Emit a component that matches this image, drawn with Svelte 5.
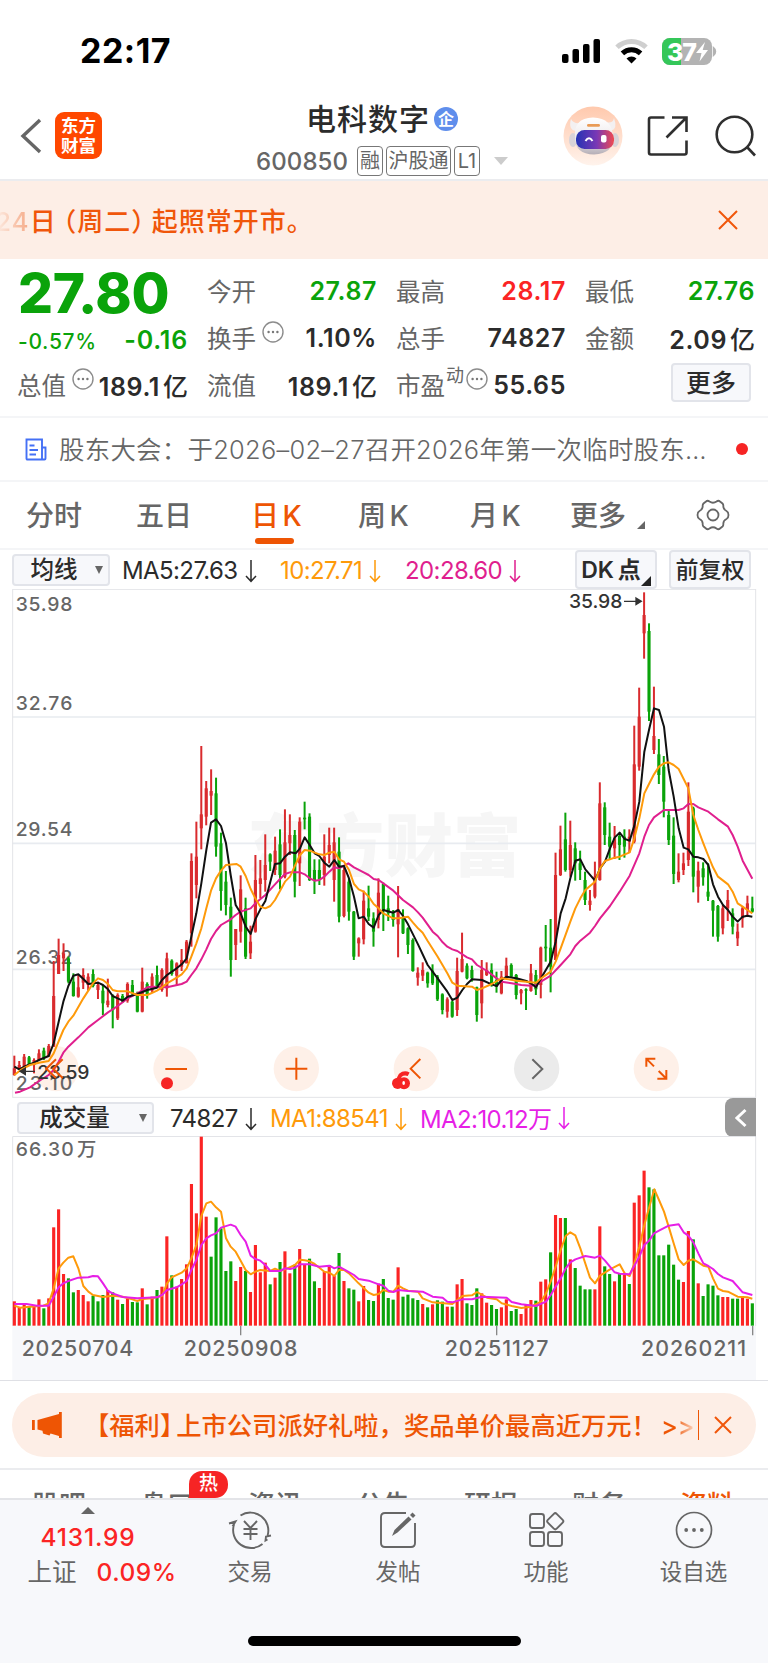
<script lang="ts">

	// Chart geometry (three chart units to one css pixel):
	const firstX = 43;
	const step = 14.76;
	const volumeBase = 707;
	const xAt = (i: number) => firstX + step * i;

	// Candles: [direction, high, body top, body bottom, low]
	const candles: number[][] = [
		[1,1427,1465,1485,1487],[1,1443,1455,1468,1468],[1,1422,1430,1462,1470],[-1,1428,1432,1455,1458],[1,1435,1440,1455,1480],
		[1,1408,1420,1440,1440],[-1,1403,1412,1435,1440],[1,1392,1398,1430,1430],[1,1143,1248,1400,1400],[1,1076,1125,1182,1182],
		[1,1090,1120,1135,1173],[-1,1130,1135,1205,1210],[-1,1180,1205,1248,1250],[1,1185,1222,1250,1253],[1,1165,1185,1208,1227],
		[1,1180,1190,1215,1232],[-1,1168,1182,1218,1222],[1,1205,1215,1230,1257],[-1,1215,1232,1270,1305],[1,1196,1262,1275,1282],
		[-1,1243,1248,1290,1345],[1,1240,1245,1315,1320],[-1,1242,1248,1265,1268],[1,1207,1212,1262,1268],[-1,1200,1215,1240,1245],
		[-1,1235,1240,1295,1297],[1,1163,1205,1295,1297],[-1,1207,1212,1245,1256],[1,1180,1190,1232,1238],[-1,1157,1185,1218,1222],
		[1,1165,1170,1230,1235],[1,1118,1135,1225,1250],[-1,1138,1142,1182,1187],[1,1147,1150,1187,1217],[1,1107,1140,1160,1173],
		[1,1080,1085,1150,1150],[1,820,843,1060,1100],[1,725,830,915,955],[1,498,703,745,808],[1,603,625,710,736],
		[1,568,633,647,705],[-1,593,640,800,830],[-1,758,790,933,992],[-1,873,905,975,1006],[-1,953,980,1140,1190],
		[1,1047,1047,1095,1140],[1,886,928,1055,1088],[-1,953,985,1130,1137],[1,1037,1085,1120,1137],[1,825,900,1055,1058],
		[1,840,895,912,955],[1,763,855,900,935],[-1,820,823,845,873],[1,770,812,870,885],[-1,748,793,885,928],
		[1,688,787,890,895],[1,703,765,790,825],[-1,750,765,905,952],[1,712,725,850,918],[-1,665,713,718,748],
		[-1,700,710,900,903],[-1,838,870,900,942],[-1,838,870,897,915],[1,763,830,885,917],[1,743,795,825,850],
		[1,743,787,900,965],[-1,772,815,1010,1027],[1,862,870,1008,1012],[-1,895,905,995,1022],[-1,993,995,1130,1140],
		[1,1072,1075,1090,1130],[1,932,962,1078,1093],[-1,917,985,1010,1023],[-1,997,1015,1055,1100],[1,895,938,1020,1045],
		[-1,908,912,990,1053],[-1,947,985,1000,1023],[-1,990,1000,1020,1040],[1,918,988,1033,1132],[-1,988,1012,1060,1062],
		[-1,1042,1045,1095,1122],[-1,1075,1080,1173,1175],[1,1162,1178,1193,1217],[1,1147,1170,1187,1203],[-1,1175,1178,1210,1223],
		[-1,1153,1172,1210,1215],[-1,1185,1190,1258,1263],[-1,1240,1243,1290,1303],[1,1252,1258,1295,1313],[-1,1262,1265,1310,1313],
		[1,1133,1173,1290,1308],[1,1058,1137,1175,1177],[-1,1150,1157,1195,1198],[-1,1157,1170,1195,1205],[-1,1220,1222,1305,1325],
		[1,1140,1170,1270,1315],[1,1147,1170,1185,1188],[-1,1150,1170,1215,1220],[-1,1175,1200,1220,1238],[1,1173,1190,1240,1243],
		[1,1133,1157,1190,1193],[-1,1150,1155,1190,1193],[-1,1182,1185,1245,1258],[1,1227,1230,1240,1273],[-1,1225,1228,1232,1290],
		[1,1152,1180,1233,1235],[-1,1170,1185,1228,1245],[1,1100,1103,1215,1255],[-1,1035,1100,1105,1145],[-1,1017,1103,1160,1237],
		[1,818,885,1140,1140],[1,737,808,885,888],[-1,698,778,870,875],[1,722,795,870,890],[-1,787,805,850,902],
		[-1,812,850,870,900],[-1,875,900,960,975],[1,930,962,975,992],[1,845,890,950,955],[1,607,670,900,902],
		[-1,667,682,765,795],[-1,728,770,800,840],[1,738,775,805,837],[-1,758,768,795,840],[-1,748,770,800,833],
		[1,748,770,785,818],[1,437,553,785,790],[1,323,410,560,572],[1,37,105,160,236],[-1,130,153,395,423],
		[1,320,468,510,522],[-1,477,523,585,612],[-1,528,560,665,712],[-1,690,705,780,795],[-1,712,767,882,912],
		[1,820,875,900,907],[1,818,850,870,885],[1,607,695,840,858],[-1,680,685,890,937],[1,845,872,920,968],
		[-1,847,865,892,917],[-1,850,935,950,963],[-1,960,962,992,1070],[-1,975,978,1070,1085],[1,975,985,1045,1063],
		[1,930,960,985,1023],[-1,985,1000,1040,1063],[1,1030,1055,1075,1098],[1,980,985,1015,1043],[1,947,970,990,1005],
		[-1,950,985,995,998]
	];

	// Volume bar tops, negative on a falling day:
	const volumes = [
		634,652,645,-648,645,628,-655,625,412,358,552,-565,-607,600,615,634,-617,-634,-615,600,-607,629,-642,625,-636,
		-637,595,-643,620,-600,590,439,-556,590,567,523,282,370,140,380,-500,-382,-415,-543,-514,573,531,-543,606,465,
		547,518,-583,563,-516,484,550,-524,477,525,-506,-574,594,545,525,558,-489,573,-595,-599,634,588,-630,-633,581,
		-567,-624,-629,532,-620,-614,-625,-630,642,-652,643,-631,-635,650,-650,583,567,-640,-645,-595,610,638,-645,-657,652,
		628,-663,-657,672,643,630,-632,575,568,-487,375,384,-384,508,-534,-587,-598,-598,598,409,-529,-552,574,-551,555,
		-582,338,316,242,-292,-298,-496,-496,-464,-524,-569,576,423,-448,580,-618,-583,-587,-616,621,621,-626,-626,618,626,
		-640
	];

	const priceLines = [
		{ color: '#e01f8e', points: '45,1538 60,1535 90,1522 117,1503 146,1485 161,1470 176,1445 190,1418 205,1400 235,1372 265,1342 294,1320 324,1297 353,1278 383,1255 412,1240 442,1222 456,1220 501,1222 545,1212 560,1205 574,1185 589,1165 604,1138 619,1108 633,1077 648,1053 663,1035 692,1018 707,1005 722,995 752,985 766,970 796,945 825,913 840,897 855,882 870,877 900,877 914,883 929,895 944,902 958,900 973,890 988,875 1003,862 1017,865 1032,857 1045,850 1062,862 1091,877 1106,885 1121,897 1136,900 1150,910 1180,932 1209,960 1239,982 1254,997 1268,1013 1298,1055 1313,1068 1328,1087 1342,1100 1357,1108 1372,1113 1401,1132 1416,1138 1431,1155 1461,1173 1490,1195 1505,1205 1535,1210 1564,1215 1593,1217 1608,1215 1623,1205 1652,1187 1682,1155 1711,1123 1726,1098 1741,1082 1770,1058 1785,1038 1800,1015 1830,978 1859,935 1889,887 1918,820 1933,770 1947,735 1962,712 1992,690 2036,690 2051,685 2065,672 2080,672 2095,682 2125,695 2154,718 2184,740 2198,765 2213,800 2228,842 2257,896' },
		{ color: '#111', points: '43,1460 58,1468 73,1460 88,1453 102,1448 117,1440 146,1428 161,1390 176,1325 190,1265 205,1218 220,1187 235,1183 250,1197 265,1212 294,1208 309,1215 324,1228 338,1248 353,1255 368,1262 383,1250 412,1242 442,1230 471,1223 486,1200 501,1185 530,1165 545,1153 560,1135 574,1070 589,1000 604,910 619,810 633,728 648,718 663,738 678,790 692,885 707,975 722,1000 737,1040 752,1062 766,1018 781,988 796,963 811,905 825,852 840,850 855,830 870,817 887,820 900,805 914,772 929,795 944,820 958,828 973,848 988,860 1003,840 1017,860 1032,858 1047,895 1062,950 1076,1015 1091,1010 1106,1032 1121,1043 1136,1005 1150,990 1180,998 1195,990 1209,1008 1224,1033 1254,1093 1283,1155 1313,1195 1342,1235 1357,1260 1372,1253 1387,1230 1401,1212 1416,1198 1446,1200 1475,1213 1490,1218 1505,1200 1520,1190 1549,1195 1579,1203 1593,1210 1608,1222 1623,1195 1652,1145 1667,1085 1682,1000 1697,955 1711,895 1726,842 1741,838 1756,868 1785,902 1800,865 1815,845 1830,805 1844,773 1859,758 1874,777 1889,782 1903,737 1918,665 1933,515 1947,450 1962,385 1977,390 1992,440 2006,570 2021,650 2036,745 2051,803 2065,808 2080,830 2095,832 2110,837 2125,855 2139,913 2154,950 2169,975 2184,990 2198,1010 2213,1025 2228,1010 2242,1007 2257,1010' },
		{ color: '#fe9a0a', points: '43,1485 65,1468 90,1455 117,1448 146,1443 161,1420 190,1350 205,1325 220,1307 250,1255 279,1210 294,1195 309,1200 324,1212 338,1230 353,1234 383,1234 412,1245 442,1245 471,1232 486,1222 501,1210 530,1193 545,1183 560,1165 574,1130 589,1090 604,1045 619,985 633,932 648,895 663,872 678,855 710,852 722,860 737,888 752,927 766,955 781,980 796,985 811,978 825,960 855,905 870,890 885,857 900,825 914,810 929,812 958,823 973,825 988,818 1003,815 1017,838 1032,845 1047,870 1062,912 1076,928 1091,935 1106,950 1121,972 1136,985 1150,1000 1180,1015 1195,1015 1224,1010 1239,1028 1254,1045 1268,1058 1283,1083 1313,1130 1342,1180 1357,1208 1372,1217 1416,1220 1431,1230 1446,1225 1475,1212 1505,1195 1520,1197 1549,1202 1579,1205 1608,1208 1623,1195 1652,1175 1667,1145 1682,1105 1711,1025 1726,985 1741,955 1756,930 1785,905 1800,865 1815,843 1844,833 1859,830 1889,817 1903,775 1918,715 1933,640 1947,612 1962,583 1977,560 1992,550 2006,547 2021,555 2036,567 2051,597 2065,625 2080,705 2095,750 2110,790 2125,828 2139,862 2154,890 2184,913 2198,935 2213,970 2228,980 2242,990 2257,1000' }
	];

	const volumeLines = [
		{ color: '#fe9a0a', points: '43,647 60,653 90,650 130,647 146,640 161,595 176,535 190,518 205,503 220,499 235,535 250,588 265,605 279,615 309,621 338,617 368,620 397,628 412,633 427,627 456,625 486,618 501,580 515,562 545,548 560,535 574,505 589,465 604,378 619,340 633,335 648,352 663,365 678,445 692,470 707,485 722,512 737,540 752,553 766,545 781,540 811,543 825,536 840,543 855,538 885,525 900,509 914,511 929,514 944,522 973,545 988,548 1003,558 1017,540 1032,540 1047,550 1076,580 1106,608 1121,615 1136,612 1150,600 1165,605 1180,605 1195,587 1209,595 1224,602 1254,605 1268,625 1298,637 1357,642 1387,618 1416,616 1431,606 1461,623 1490,628 1505,640 1535,648 1564,654 1593,650 1623,635 1638,610 1652,575 1667,530 1682,480 1697,438 1711,427 1726,436 1741,475 1770,563 1785,580 1800,557 1830,538 1859,523 1874,550 1889,558 1903,520 1918,470 1933,405 1948,350 1963,298 1977,330 1992,365 2006,410 2021,460 2036,508 2051,525 2065,512 2080,508 2095,517 2110,527 2125,530 2139,565 2154,596 2169,603 2184,605 2213,620 2242,622 2257,626' },
		{ color: '#e61fe6', points: '43,642 80,642 110,647 146,647 161,620 176,592 190,580 205,573 235,563 265,562 279,558 294,559 309,580 324,603 338,610 368,621 412,625 471,622 486,615 501,600 530,592 545,583 560,573 574,540 589,510 604,465 619,445 633,436 648,430 663,413 692,404 707,410 722,435 737,455 752,497 766,507 781,512 796,525 811,543 840,543 855,535 870,537 885,533 900,523 929,523 958,530 988,527 1003,535 1017,530 1032,538 1062,555 1076,567 1106,572 1136,583 1150,587 1165,602 1180,606 1195,600 1224,603 1268,605 1298,620 1328,623 1342,635 1357,637 1387,628 1416,628 1446,620 1520,623 1535,636 1564,643 1608,648 1638,635 1652,615 1682,565 1697,535 1711,517 1726,508 1756,498 1785,503 1800,497 1815,512 1844,547 1859,551 1889,553 1903,527 1918,500 1933,465 1947,452 1962,430 1977,422 2006,407 2036,403 2051,427 2065,437 2080,457 2095,490 2110,520 2125,528 2139,537 2154,552 2169,562 2198,573 2213,590 2228,607 2257,615' }
	];

	const priceLabels = [
		{ text: '35.98', y: 92 },
		{ text: '32.76', y: 390 },
		{ text: '29.54', y: 769 },
		{ text: '26.32', y: 1151 },
		{ text: '23.10', y: 1530 }
	];

	const dates = [
		{ text: '20250704', x: 65, width: 335, tick: 0 },
		{ text: '20250908', x: 551, width: 341, tick: 722 },
		{ text: '20251127', x: 1334, width: 311, tick: 1490 },
		{ text: '20260211', x: 1923, width: 315, tick: 2258 }
	];

	const periods = ['分时', '五日', '日 K', '周 K', '月 K', '更多'];
	const sections = ['股吧', '盘口', '资讯', '公告', '研报', '财务', '资料'];
	let period = $state('日 K');
	let section = $state('资料');

</script>

<!-- #################################################################################################### -->

{#snippet info()}
	<svg class="info" viewBox="0 0 22 22">
		<circle cx="11" cy="11" r="10" fill="none" stroke="#8c8c8c" stroke-width="1.4" />
		<circle cx="6.6" cy="11" r="1.2" fill="#777" />
		<circle cx="11" cy="11" r="1.2" fill="#777" />
		<circle cx="15.4" cy="11" r="1.2" fill="#777" />
	</svg>
{/snippet}

{#snippet down()}
	<svg class="down" viewBox="0 0 12 24" fill="none" stroke="currentColor" stroke-width="1.5">
		<path d="M6 1V22M1 17L6 22.3L11 17" />
	</svg>
{/snippet}

<div class="screen">

	<!-- Status Bar -->
	<div class="status">
		<span class="clock">22:17</span>
		<svg class="signals" width="156" height="28" viewBox="0 0 156 28">
			<rect x="0" y="16" width="6.5" height="9" rx="2" />
			<rect x="10.5" y="11" width="6.5" height="14" rx="2" />
			<rect x="21" y="6" width="6.5" height="19" rx="2" />
			<rect x="31.5" y="1" width="6.5" height="24" rx="2" />
			<g fill="none" stroke-width="5">
				<path d="M55 9.2A21 21 0 0 1 84 9.2" stroke="#cfcfcf" />
				<path d="M60.4 15.4A13.3 13.3 0 0 1 78.6 15.4" stroke="#000" />
			</g>
			<path d="M64.5 20.5A7.4 7.4 0 0 1 74.5 20.5L69.5 25.5Z" />
			<rect x="100" y="0" width="50" height="27" rx="8" fill="#b3b3b3" />
			<path d="M108 0H119V27H108A8 8 0 0 1 100 19V8A8 8 0 0 1 108 0Z" fill="#34c759" />
			<path d="M151.5 9.5A5 5 0 0 1 151.5 17.5Z" fill="#b3b3b3" stroke="#b3b3b3" stroke-width="1.5" />
			<text x="105" y="22.5" class="charge" textLength="30">37</text>
			<path d="M143 4L134 15H139.5L137.5 23.5L146 12H140.7Z" fill="#fff" />
		</svg>
	</div>

	<!-- Header -->
	<header>
		<svg class="back" width="22" height="36" viewBox="0 0 22 36" fill="none" stroke="#666" stroke-width="3.4">
			<path d="M20 2L3 18L20 34" />
		</svg>
		<div class="brand"><span>东方</span><span>财富</span></div>
		<div class="stock">
			<div class="name">
				<h1>电科数字</h1>
				<span class="badge">企</span>
			</div>
			<div class="code">
				<strong>600850</strong>
				<span class="tag">融</span>
				<span class="tag wide">沪股通</span>
				<span class="tag">L1</span>
				<svg width="14" height="8" viewBox="0 0 14 8"><path d="M0 0H14L7 8Z" fill="#ccc" /></svg>
			</div>
		</div>
		<svg class="robot" width="60" height="60" viewBox="0 0 60 60">
			<defs>
				<linearGradient id="halo" x1="0" y1="0" x2="0" y2="1">
					<stop offset="0" stop-color="#ffc9ad" />
					<stop offset="1" stop-color="#fff3ec" />
				</linearGradient>
				<linearGradient id="visor">
					<stop offset="0" stop-color="#2533b4" />
					<stop offset=".55" stop-color="#7a38b5" />
					<stop offset="1" stop-color="#f04a50" />
				</linearGradient>
				<linearGradient id="shell" x1="0" y1="0" x2="0" y2="1">
					<stop offset="0" stop-color="#fff" />
					<stop offset=".6" stop-color="#ece8ea" />
					<stop offset="1" stop-color="#b5aeb6" />
				</linearGradient>
			</defs>
			<circle cx="30" cy="30" r="29.5" fill="url(#halo)" />
			<ellipse cx="10" cy="34" rx="4" ry="7" fill="#d8d3d8" />
			<ellipse cx="52" cy="34" rx="4" ry="7" fill="#d8d3d8" />
			<path d="M8 13Q5 24 13 25L18 17Q10 18 8 13ZM51 12Q55 23 48 25L42 16Q50 18 51 12Z" fill="#f3f0f1" />
			<path d="M12 32Q10 12 30 11.5Q50 12 50 32Q51 47 31 48.5Q12 48 12 32Z" fill="url(#shell)" />
			<rect x="13" y="24" width="38" height="19" rx="8.5" fill="url(#visor)" />
			<rect x="24" y="18" width="13" height="2.8" rx="1.4" fill="#e99b56" />
			<path d="M22.5 35Q26 29.5 29.5 35" fill="none" stroke="#fff" stroke-width="2" />
			<rect x="38" y="29" width="5.5" height="7.5" rx="2" fill="#fff" />
		</svg>
		<svg class="share" width="42" height="42" viewBox="0 0 42 42" fill="none" stroke="#2f2f2f" stroke-width="2.6">
			<path d="M17.5 2.5H4Q2 2.5 2 4.5V37.5Q2 39.5 4 39.5H37.5Q39.5 39.5 39.5 37.5V25.5M25 2.5H39.5V17M39 3L19.5 22.5" />
		</svg>
		<svg class="search" width="42" height="42" viewBox="0 0 42 42" fill="none" stroke="#2f2f2f" stroke-width="2.6">
			<circle cx="19.5" cy="19.5" r="17.8" />
			<path d="M32 32L40 40.5" />
		</svg>
	</header>

	<!-- Notice -->
	<div class="notice">
		<p><span class="faded">24</span>日<span class="open">（</span>周二<span class="close">）</span>起照常开市。</p>
		<svg width="20" height="20" viewBox="0 0 20 20" stroke="#f0560a" stroke-width="2"><path d="M1 1L19 19M19 1L1 19" /></svg>
	</div>

	<!-- Quote -->
	<section class="quote">
		<div class="main">
			<strong class="price">27.80</strong>
			<div class="change"><span>-0.57%</span><b>-0.16</b></div>
			<div class="cell"><span>总值</span>{@render info()}<b>189.1<i>亿</i></b></div>
		</div>
		<div class="col">
			<div class="cell"><span>今开</span><b class="fall">27.87</b></div>
			<div class="cell"><span>换手</span>{@render info()}<b>1.10%</b></div>
			<div class="cell"><span>流值</span><b>189.1<i>亿</i></b></div>
		</div>
		<div class="col">
			<div class="cell"><span>最高</span><b class="rise">28.17</b></div>
			<div class="cell"><span>总手</span><b>74827</b></div>
			<div class="cell"><span>市盈</span><sup>动</sup>{@render info()}<b>55.65</b></div>
		</div>
		<div class="col">
			<div class="cell"><span>最低</span><b class="fall">27.76</b></div>
			<div class="cell"><span>金额</span><b>2.09<i>亿</i></b></div>
			<button class="more">更多</button>
		</div>
	</section>

	<!-- News -->
	<div class="news">
		<svg width="22" height="23" viewBox="0 0 22 23" fill="none" stroke="#4470f5" stroke-width="1.9">
			<path d="M1.5 1.5H17V21.5H2.5Q1.5 21.5 1.5 20.5ZM17 9.5H20.5V20.5Q20.5 21.5 19.5 21.5H15" />
			<path d="M4.5 7.5H9.5M4.5 12H13M4.5 16.5H11" />
		</svg>
		<p>股东大会：于2026–02–27召开2026年第一次临时股东…</p>
		<span class="dot"></span>
	</div>

	<!-- Period Tabs -->
	<nav class="periods">
		{#each periods as item}
			<button class:active={period === item} onclick={() => period = item}>{item}</button>
		{/each}
		<svg class="corner" width="8" height="8" viewBox="0 0 8 8"><path d="M8 0V8H0Z" fill="#666" /></svg>
		<svg class="gear" width="34" height="32" viewBox="0 0 34 32" fill="none" stroke="#666" stroke-width="1.8">
			<path d="M10 2.5Q11.5 1 13.5 2.5Q17 5 20.5 2.5Q22.5 1 24 2.5L26.5 4.5Q27.5 5.5 27.3 7Q27.2 10.5 30.5 12Q32.5 13 32.5 16Q32.5 19 30.5 20Q27.2 21.5 27.3 25Q27.5 26.5 26.5 27.5L24 29.5Q22.5 31 20.5 29.5Q17 27 13.5 29.5Q11.5 31 10 29.5L7.5 27.5Q6.5 26.5 6.7 25Q6.8 21.5 3.5 20Q1.5 19 1.5 16Q1.5 13 3.5 12Q6.8 10.5 6.7 7Q6.5 5.5 7.5 4.5Z" />
			<circle cx="17" cy="16" r="5.5" />
		</svg>
	</nav>

	<!-- Averages -->
	<div class="averages">
		<button class="select">均线<i></i></button>
		<span class="value">MA5:27.63{@render down()}</span>
		<span class="value ten">10:27.71{@render down()}</span>
		<span class="value twenty">20:28.60{@render down()}</span>
		<button class="box dk">DK 点<i></i></button>
		<button class="box">前复权</button>
	</div>

	<!-- Candle Chart -->
	<svg class="candles" width="768" height="509" viewBox="0 27 2304 1527">
		<text x="742" y="874" class="watermark" textLength="822">东方财富</text>
		<circle cx="168" cy="1466" r="68" fill="#fef0e8" />
		<g stroke="#e8ebf0" stroke-width="5" fill="none">
			<path d="M37 411H2267M37 790H2267M37 1168H2267" />
			<rect x="38" y="28" width="2229" height="1524" stroke-width="3" stroke="#e3e4e8" />
		</g>
		{#each priceLabels as label}
			<text x="47" y={label.y} class="label" textLength="170">{label.text}</text>
		{/each}
		{#each candles as [direction, high, top, bottom, low], i}
			<g fill={direction > 0 ? '#d92b2e' : '#0aa30a'}>
				<rect x={xAt(i) - 3} y={high} width="6" height={low - high} />
				<rect x={xAt(i) - 4.7} y={top} width="9.4" height={bottom - top} />
			</g>
		{/each}
		{#each priceLines as line}
			<polyline points={line.points} fill="none" stroke={line.color} stroke-width="6" stroke-linejoin="round" />
		{/each}
		<text x="1707" y="85" class="label dark" textLength="160">35.98</text>
		<path d="M1872 64H1915M1908 54L1924 64L1908 74Z" class="arrow" />
		<text x="112" y="1496" class="label dark" textLength="156">23.59</text>
		<path d="M105 1474H70M76 1464L60 1474L76 1484Z" class="arrow" />

		<!-- Chart Controls -->
		<g class="controls">
			<circle cx="528" cy="1466" r="68" />
			<circle cx="889" cy="1466" r="68" />
			<circle cx="1249" cy="1466" r="68" />
			<circle cx="1610" cy="1466" r="68" class="off" />
			<circle cx="1969" cy="1466" r="68" />
			<path d="M168 1438L139 1466L168 1494M188 1438L159 1466L188 1494" />
			<path d="M496 1467H561M857 1466H922M889 1433V1499M1261 1437L1232 1466L1261 1495" />
			<path d="M1597 1438L1627 1467L1597 1496" class="offArrow" />
			<path d="M1939 1460V1436H1966M1941 1438L1962 1459M1999 1470V1496H1972M1997 1494L1976 1473" />
		</g>
		<circle cx="501" cy="1510" r="18" fill="#f62424" />
		<g fill="#f62424">
			<circle cx="1193" cy="1510" r="17" />
			<circle cx="1212" cy="1510" r="18" />
		</g>
		<path d="M1226 1483Q1213 1476 1201 1486Q1196 1493 1195 1502" fill="none" stroke="#f62424" stroke-width="12" />
		<ellipse cx="1211" cy="1509" rx="4" ry="6" fill="#fff" />
	</svg>

	<!-- Volume -->
	<div class="averages volumeRow">
		<button class="select">成交量<i></i></button>
		<span class="value">74827{@render down()}</span>
		<span class="value ten">MA1:88541{@render down()}</span>
		<span class="value two">MA2:10.12万{@render down()}</span>
		<button class="collapse">
			<svg width="12" height="20" viewBox="0 0 12 20" fill="none" stroke="#fff" stroke-width="3"><path d="M10.5 2L2 10L10.5 18" /></svg>
		</button>
	</div>
	<svg class="volume" width="768" height="245" viewBox="0 138 2304 735">
		<rect x="37" y="707" width="2231" height="163" fill="#f7f8fb" />
		<path d="M38 708V139.5H2267V708" fill="none" stroke="#e3e4e8" stroke-width="3" />
		<path d="M0 871.5H2304" stroke="#dfe0e5" stroke-width="3" />
		<text x="47" y="198" class="label" textLength="174">66.30</text>
		<text x="231" y="199" class="label">万</text>
		{#each volumes as volume, i}
			<rect x={xAt(i) - 4.7} y={Math.abs(volume)} width="9.4" height={volumeBase - Math.abs(volume)} fill={volume > 0 ? '#fb2424' : '#0aa30a'} />
		{/each}
		{#each volumeLines as line}
			<polyline points={line.points} fill="none" stroke={line.color} stroke-width="6" stroke-linejoin="round" />
		{/each}
		{#each dates as date}
			{#if date.tick}
				<path d="M{date.tick} 708V736" stroke="#888" stroke-width="4" />
			{/if}
			<text x={date.x} y="799" class="date" textLength={date.width}>{date.text}</text>
		{/each}
	</svg>

	<!-- Promo -->
	<div class="promo">
		<svg width="30" height="26" viewBox="0 0 30 26" fill="#ee5504">
			<path d="M0 8H2.8V18H0ZM5.5 8L27 2V0H29.8V26H27V24L18.5 21.5L17.5 23.5L11 21.5L10.5 18.8L5.5 17.5Z" />
		</svg>
		<p>【福利<span class="bracket">】</span>上市公司派好礼啦，奖品单价最高近万元！<span class="go">&gt;&gt;</span></p>
		<i class="rule"></i>
		<svg width="18" height="18" viewBox="0 0 18 18" stroke="#f0560a" stroke-width="2"><path d="M1 1L17 17M17 1L1 17" /></svg>
	</div>

	<!-- Section Tabs -->
	<nav class="sections">
		{#each sections as item}
			<button class:active={section === item} onclick={() => section = item}>{item}</button>
		{/each}
		<span class="hot">热</span>
	</nav>

	<!-- Bottom Bar -->
	<footer>
		<div class="index">
			<svg width="14" height="7" viewBox="0 0 14 7"><path d="M0 7L7 0L14 7Z" fill="#666" /></svg>
			<b>4131.99</b>
			<span>上证<b>0.09%</b></span>
		</div>
		<div class="action">
			<svg width="44" height="40" viewBox="0 0 44 40" fill="none" stroke="#666" stroke-width="1.9">
				<path d="M12.5 5.5A18 18 0 0 1 39.5 26M39.5 29.5L37.5 30.5L38 26.5L43 25.5M34.5 34A18 18 0 0 1 6 14.5M1 13.5L7.5 11.5L4.5 16.5" />
				<path d="M16 11L22.5 18L29 11M15.5 19H29.5M15.5 24H29.5M22.5 18V30" />
			</svg>
			<span>交易</span>
		</div>
		<div class="action">
			<svg width="38" height="40" viewBox="0 0 38 40" fill="none" stroke="#666" stroke-width="1.9">
				<path d="M27 3H6Q2 3 2 7V33Q2 37 6 37H32Q36 37 36 33V13" />
				<path d="M13 26L15.5 20L29.5 6.5L32.5 9.5L18.5 22.5Z" fill="#666" stroke="none" />
				<path d="M31 5L33.5 2.5L36.5 5.5L34 8Z" fill="#666" stroke="none" />
			</svg>
			<span>发帖</span>
		</div>
		<div class="action">
			<svg width="38" height="40" viewBox="0 0 38 40" fill="none" stroke="#666" stroke-width="1.9">
				<rect x="3" y="4" width="14" height="14" rx="2.5" />
				<rect x="3" y="22" width="14" height="14" rx="2.5" />
				<rect x="21" y="22" width="14" height="14" rx="2.5" />
				<rect x="22" y="5" width="12.5" height="12.5" rx="2" transform="rotate(45 28.25 11.25)" />
			</svg>
			<span>功能</span>
		</div>
		<div class="action">
			<svg width="38" height="40" viewBox="0 0 38 40" fill="none" stroke="#666" stroke-width="1.7">
				<circle cx="19" cy="20" r="17.5" />
				<g fill="#666" stroke="none"><circle cx="11.2" cy="20" r="1.9" /><circle cx="19" cy="20" r="1.9" /><circle cx="26.8" cy="20" r="1.9" /></g>
			</svg>
			<span>设自选</span>
		</div>
		<i class="home"></i>
	</footer>

</div>

<!-- #################################################################################################### -->

<style>

	:global(body) {
		margin: 0;
		background: #fff;
	}

	.screen {
		width: 768px;
		height: 1663px;
		overflow: hidden;
		display: flex;
		flex-direction: column;
		font-family: Inter, 'Noto Sans CJK SC', sans-serif;
		color: #2b2b2b;
		background: #fff;
	}

	.screen > * {
		flex: none;
		box-sizing: border-box;
	}

	svg {
		display: block;
		flex: none;
	}

	button {
		padding: 0;
		font: inherit;
		color: inherit;
		background: none;
		border: none;
		white-space: nowrap;
	}

	p, h1 {
		margin: 0;
		white-space: nowrap;
	}

	i {
		font-style: normal;
	}

	.status {
		display: flex;
		justify-content: space-between;
		align-items: flex-start;
		height: 100px;
		padding: 38px 50px 0 80px;
	}

	.clock {
		font-size: 34px;
		font-weight: 750;
		line-height: 26px;
		letter-spacing: .5px;
		color: #000;
	}

	.charge {
		font-size: 25px;
		font-weight: 800;
		fill: #fff;
	}

	header {
		display: flex;
		height: 81px;
		padding-left: 20px;
		border-bottom: 2px solid #ebecef;
	}

	.back {
		margin-top: 18px;
	}

	.brand {
		display: flex;
		flex-direction: column;
		justify-content: center;
		align-items: center;
		width: 47px;
		height: 47px;
		margin: 12px 0 0 13px;
		font-size: 17.5px;
		font-weight: 700;
		line-height: 20px;
		color: #fff;
		background: #ff4800;
		border-radius: 9px;
	}

	.stock {
		width: 316px;
		margin: -3px 0 0 154px;
	}

	.name {
		display: flex;
		align-items: center;
		height: 44px;
		padding-left: 50px;
	}

	h1 {
		font-size: 30px;
		font-weight: 500;
		letter-spacing: 1px;
		line-height: 40px;
	}

	.badge {
		width: 24px;
		height: 24px;
		margin-left: 4px;
		font-size: 16px;
		font-weight: 700;
		line-height: 24px;
		text-align: center;
		color: #fff;
		background: #5f8eec;
		border-radius: 50%;
	}

	.code {
		display: flex;
		align-items: center;
		height: 40px;
		color: #666;
	}

	.code strong {
		width: 96px;
		font-size: 24px;
		font-weight: 500;
		letter-spacing: .1px;
	}

	.tag {
		box-sizing: border-box;
		width: 26px;
		height: 30px;
		margin-left: 3px;
		font-size: 20px;
		line-height: 28px;
		text-align: center;
		border: 1px solid #777;
		border-radius: 4px;
	}

	.tag.wide {
		width: 65px;
	}

	.code .tag:nth-of-type(1) {
		margin-left: 5px;
	}

	.code svg {
		margin-left: 14px;
	}

	.robot {
		margin: 6px 0 0 -9px;
	}

	.share {
		margin: 15px 0 0 24px;
	}

	.search {
		margin: 15px 0 0 26px;
	}

	.notice {
		display: flex;
		align-items: center;
		height: 78px;
		padding-right: 30px;
		font-size: 26px;
		font-weight: 500;
		color: #f0560a;
		background: #fdeee6;
	}

	.notice p {
		flex: 1;
		margin: -2px 0 0 -5px;
		letter-spacing: 1px;
	}

	.open {
		margin-left: -6.5px;
	}

	.close {
		margin-right: -6.5px;
	}

	.faded {
		background: linear-gradient(90deg, #fdeee6, #f5a884);
		background-clip: text;
		color: transparent;
	}

	.quote {
		display: grid;
		grid-template-columns: 170px 169px 169px 169px;
		column-gap: 20px;
		height: 159px;
		padding: 8px 0 0 18px;
		border-bottom: 2px solid #f4f5f7;
	}

	.cell {
		display: flex;
		align-items: center;
		height: 47px;
	}

	.cell span {
		margin-left: -1px;
		font-size: 24.5px;
		color: #666;
	}

	.cell b {
		margin-left: auto;
		font-size: 25px;
		font-weight: 600;
		letter-spacing: .6px;
		white-space: nowrap;
	}

	.cell b i {
		margin-left: 3px;
		letter-spacing: 0;
		font-weight: 500;
	}

	.cell sup {
		align-self: flex-start;
		margin: 1px 0 0 1px;
		font-size: 18px;
		line-height: 28px;
		color: #666;
	}

	.info {
		width: 22px;
		height: 22px;
		margin: -11px 0 0 6px;
	}

	.cell sup + .info {
		margin-left: 2px;
	}

	.main .info {
		margin-right: -8px;
	}

	.price {
		display: block;
		height: 52px;
		font-size: 55px;
		font-weight: 800;
		line-height: 52px;
		letter-spacing: -.3px;
		color: #0aa30a;
	}

	.change {
		display: flex;
		justify-content: space-between;
		align-items: baseline;
		height: 42px;
		line-height: 42px;
		color: #0aa30a;
	}

	.change span {
		font-size: 21px;
		font-weight: 500;
		letter-spacing: .7px;
	}

	.change b {
		font-size: 25px;
		font-weight: 600;
		letter-spacing: .8px;
	}

	.rise {
		color: #fb2424;
	}

	.fall {
		color: #0aa30a;
	}

	.more {
		box-sizing: border-box;
		display: block;
		width: 80px;
		height: 39px;
		margin: 2px 0 0 85px;
		font-size: 25px;
		font-weight: 500;
		line-height: 34px;
		background: #f7f8fb;
		border: 2px solid #e2e4ea;
		border-radius: 4px;
	}

	.news {
		display: flex;
		align-items: center;
		height: 64px;
		padding: 0 20px 0 25px;
		color: #666;
		border-bottom: 2px solid #f4f5f7;
	}

	.news p {
		flex: 1;
		margin: -3px 0 0 12px;
		font-size: 25.4px;
		font-weight: 350;
		letter-spacing: .3px;
	}

	.dot {
		width: 12px;
		height: 12px;
		border-radius: 50%;
		background: #f62424;
	}

	.periods {
		display: grid;
		grid-template-columns: 110px 115px 107px 112px 100px 89px 20px 1fr;
		align-items: center;
		height: 68px;
		padding-left: 26px;
		font-size: 28px;
		font-weight: 500;
		color: #666;
		border-bottom: 2px solid #f4f5f7;
	}

	.periods button {
		position: relative;
		justify-self: start;
		height: 66px;
		padding-bottom: 3px;
		word-spacing: -4px;
	}

	.periods .active {
		color: #ee5504;
	}

	.periods .active::after {
		content: '';
		position: absolute;
		left: 4px;
		bottom: 4px;
		width: 39px;
		height: 6px;
		border-radius: 3px;
		background: #ee5504;
	}

	.corner {
		margin: 20px 0 0 -22px;
	}

	.gear {
		margin-left: 17px;
	}

	.averages {
		display: grid;
		grid-template-columns: 110px 158px 125px 170px 94px 83px;
		align-items: center;
		height: 39px;
		padding-left: 12px;
		font-size: 24px;
	}

	.select {
		position: relative;
		box-sizing: border-box;
		width: 98px;
		height: 32px;
		padding-right: 14px;
		font-size: 23.5px;
		font-weight: 500;
		line-height: 28px;
		background: #f7f8fb;
		border: 2px solid #e2e4ea;
		border-radius: 4px;
	}

	.select i {
		position: absolute;
		right: 5px;
		top: 10px;
		border: 4.5px solid transparent;
		border-top: 8px solid #666;
		border-bottom: 0;
	}

	.value {
		display: flex;
		align-items: center;
		padding-top: 2px;
		letter-spacing: -.6px;
		white-space: nowrap;
	}

	.ten {
		color: #fe9a0a;
	}

	.twenty {
		color: #e01f8e;
	}

	.two {
		padding-top: 0;
		color: #e61fe6;
	}

	.down {
		width: 12px;
		height: 24px;
		margin-left: 7px;
	}

	.box {
		position: relative;
		box-sizing: border-box;
		width: 82px;
		height: 39px;
		font-size: 23px;
		font-weight: 500;
		line-height: 37px;
		background: #f7f8fb;
		border: 2px solid #e2e4ea;
		border-radius: 4px;
	}

	.dk {
		padding-right: 10px;
		font-weight: 600;
		word-spacing: -2px;
	}

	.dk i {
		position: absolute;
		right: 4px;
		bottom: 1px;
		border: 5.5px solid #222;
		border-top-color: transparent;
		border-left-color: transparent;
	}

	.label {
		font-size: 58px;
		font-weight: 500;
		fill: #666;
	}

	.label.dark {
		fill: #333;
	}

	.date {
		font-size: 64px;
		font-weight: 500;
		fill: #666;
	}

	.arrow {
		fill: #333;
		stroke: #333;
		stroke-width: 4;
	}

	.watermark {
		font-size: 205px;
		font-weight: 900;
		fill: #f6f6f6;
	}

	.controls path {
		fill: none;
		stroke: #ee5504;
		stroke-width: 6;
	}

	.controls circle {
		fill: #fef0e8;
	}

	.controls .off {
		fill: #ebebeb;
	}

	.controls .offArrow {
		stroke: #666;
	}

	.volumeRow {
		grid-template-columns: 153px 100px 150px 305px 31px;
		height: 38px;
		padding-left: 17px;
	}

	.volumeRow .select {
		width: 137px;
		padding-right: 22px;
	}

	.collapse {
		display: flex;
		justify-content: center;
		align-items: center;
		height: 39px;
		background: #999;
		border-radius: 8px 0 0 8px;
	}

	.promo {
		display: flex;
		align-items: center;
		width: 744px;
		height: 64px;
		margin: 12px 12px 11px;
		padding-left: 20px;
		font-size: 25.3px;
		font-weight: 500;
		color: #ee5504;
		background: #fdeee6;
		border-radius: 32px;
	}

	.promo p {
		width: 607px;
		margin: -2px 0 0 22px;
	}

	.bracket {
		margin-right: -9px;
	}

	.go {
		margin-left: 4px;
		background: linear-gradient(90deg, #ee5504 40%, #fbd8c6);
		background-clip: text;
		color: transparent;
	}

	.rule {
		width: 1px;
		height: 30px;
		margin: 0 15px 0 7px;
		background: #ee5504;
	}

	.sections {
		position: relative;
		display: grid;
		grid-template-columns: repeat(7, 108px);
		align-items: start;
		height: 30px;
		padding: 16px 0 0 5px;
		font-size: 27px;
		font-weight: 500;
		line-height: 40px;
		color: #666;
		border-top: 2px solid #ebecef;
		overflow: hidden;
	}

	.sections .active {
		color: #ee5504;
	}

	.hot {
		position: absolute;
		left: 189px;
		top: 1px;
		width: 39px;
		height: 27px;
		font-size: 19px;
		line-height: 26px;
		text-align: center;
		color: #fff;
		background: #f62424;
		border-radius: 13px 13px 13px 0;
	}

	footer {
		position: relative;
		display: grid;
		grid-template-columns: 176px 148px 148px 148px 147px;
		height: 165px;
		font-size: 22.5px;
		color: #666;
		background: #f7f8fb;
		border-top: 2px solid #e3e4e8;
	}

	.index, .action {
		display: flex;
		flex-direction: column;
		align-items: center;
	}

	.index {
		padding-top: 7px;
		font-size: 24.5px;
		line-height: 34px;
	}

	.index > b {
		margin-top: 6px;
		letter-spacing: .8px;
	}

	.index span {
		margin: 1px 0 0 28px;
		white-space: nowrap;
	}

	.index b {
		font-weight: 500;
		color: #fb2424;
	}

	.index span b {
		margin-left: 20px;
		letter-spacing: .5px;
	}

	.action {
		padding-top: 10px;
		line-height: 34px;
	}

	.action span {
		margin-top: 5px;
	}

	.home {
		position: absolute;
		left: 248px;
		bottom: 17px;
		width: 273px;
		height: 10px;
		border-radius: 5px;
		background: #000;
	}

</style>
